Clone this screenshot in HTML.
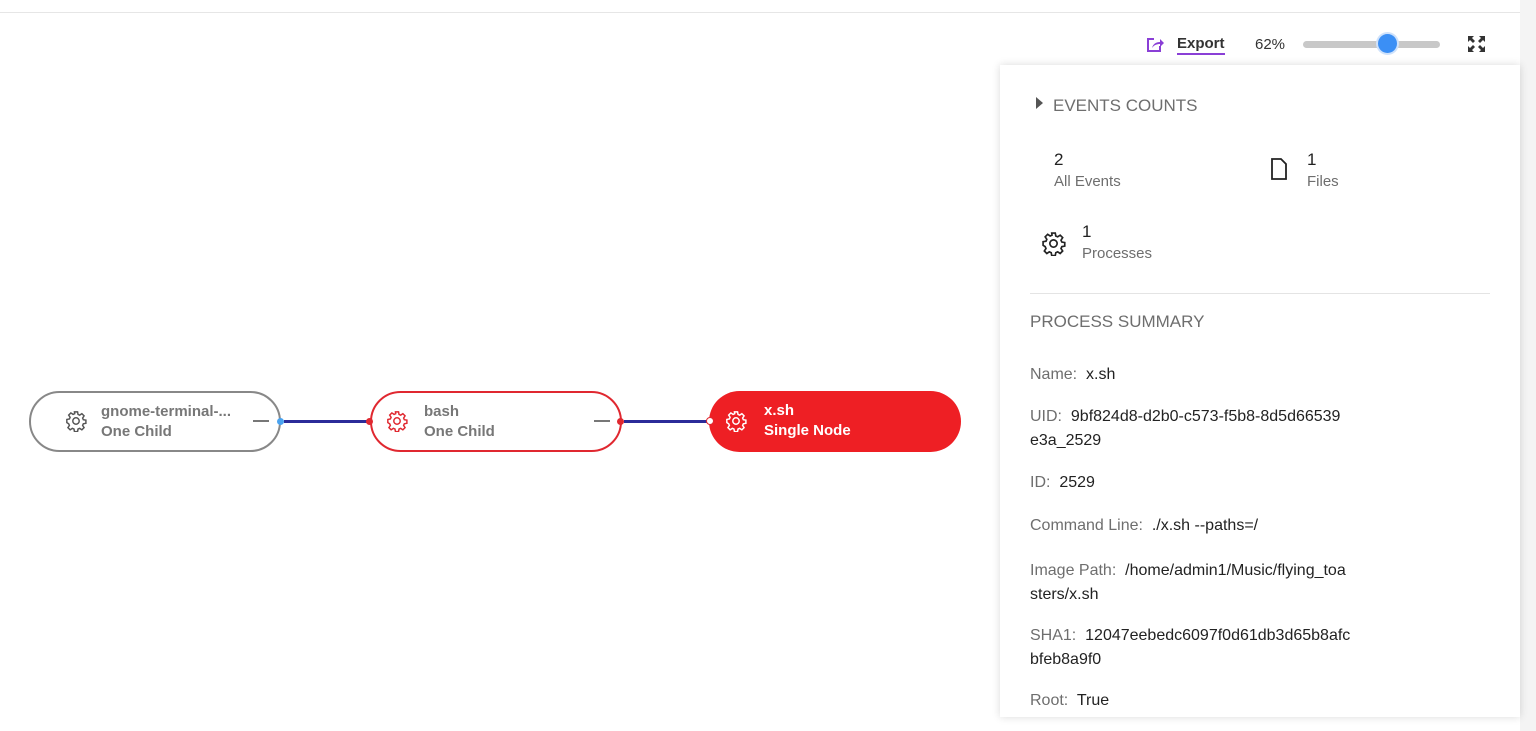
<!DOCTYPE html>
<html><head><style>
body{margin:0;width:1536px;height:731px;background:#fff;font-family:"Liberation Sans",sans-serif;position:relative;overflow:hidden}
.a{position:absolute}
.node{position:absolute;top:391px;width:248px;height:57px;border-radius:31px;border:2px solid #888;background:#fff}
.node .t{position:absolute;left:70px;top:9px;font-size:15px;font-weight:bold;color:#777;line-height:20px}
.node svg.g{position:absolute;left:34px;top:17px}
.dash{position:absolute;right:10px;top:27px;width:16px;height:2px;background:#777}
.line{position:absolute;top:420px;height:3px;background:#2b2b99}
.p{position:absolute;left:1030px;font-size:16px;color:#222;line-height:24px}
.lab,.p.lab,.p .lab{color:#6e6e6e}
</style></head><body>
<div class="a" style="left:0;top:12px;width:1536px;height:1px;background:#e6e6e6"></div>
<div class="a" style="left:1520px;top:0;width:16px;height:731px;background:#f4f4f4"></div>

<svg class="a" style="left:1146px;top:37px" width="18" height="16" viewBox="0 0 18 16"><path d="M8 2H2v12h12V9" fill="none" stroke="#8a3fd6" stroke-width="2"/><path d="M6 11c1-4 4-6 8-6V2l4 4-4 4V7c-3 0-6 1-8 4z" fill="#8a3fd6"/></svg>
<div class="a" style="left:1177px;top:35px;font-size:15px;font-weight:bold;color:#333;border-bottom:2px solid #8a3fd6;line-height:18px">Export</div>
<div class="a" style="left:1255px;top:36px;font-size:15px;color:#333">62%</div>
<div class="a" style="left:1303px;top:41px;width:137px;height:7px;border-radius:4px;background:#c8c8c8"></div>
<div class="a" style="left:1378px;top:34px;width:19px;height:19px;border-radius:50%;background:#3b8ff5;box-shadow:0 0 0 2px #cfe2fb"></div>
<svg class="a" style="left:1467px;top:35px" width="19" height="18" viewBox="0 0 19 18" fill="#333"><path d="M1 1h6l-2 2 3 3-2 2-3-3-2 2z M18 1h-6l2 2-3 3 2 2 3-3 2 2z M1 17h6l-2-2 3-3-2-2-3 3-2-2z M18 17h-6l2-2-3-3 2-2 3 3 2-2z"/></svg>

<div class="node" style="left:29px"><svg class="g" width="22" height="22" viewBox="0 0 24 24" fill="none" stroke="#555" stroke-width="1.6"><path d="M10.3 2h3.4l.5 2.8 1.8.8 2.4-1.6 2.4 2.4-1.6 2.4.8 1.8 2.8.5v3.4l-2.8.5-.8 1.8 1.6 2.4-2.4 2.4-2.4-1.6-1.8.8-.5 2.8h-3.4l-.5-2.8-1.8-.8-2.4 1.6-2.4-2.4 1.6-2.4-.8-1.8L2 13.7v-3.4l2.8-.5.8-1.8L4 5.6 6.4 3.2l2.4 1.6 1.8-.8z"/><circle cx="12" cy="12" r="3.5"/></svg><div class="t">gnome-terminal-...<br>One Child</div><div class="dash"></div></div>
<div class="a" style="left:277px;top:418px;width:7px;height:7px;border-radius:50%;background:#4aa3f0"></div>
<div class="line" style="left:284px;width:84px"></div>
<div class="node" style="left:370px;border-color:#e02830"><svg class="g" style="left:14px" width="22" height="22" viewBox="0 0 24 24" fill="none" stroke="#e02830" stroke-width="1.6"><path d="M10.3 2h3.4l.5 2.8 1.8.8 2.4-1.6 2.4 2.4-1.6 2.4.8 1.8 2.8.5v3.4l-2.8.5-.8 1.8 1.6 2.4-2.4 2.4-2.4-1.6-1.8.8-.5 2.8h-3.4l-.5-2.8-1.8-.8-2.4 1.6-2.4-2.4 1.6-2.4-.8-1.8L2 13.7v-3.4l2.8-.5.8-1.8L4 5.6 6.4 3.2l2.4 1.6 1.8-.8z"/><circle cx="12" cy="12" r="3.5"/></svg><div class="t" style="left:52px">bash<br>One Child</div><div class="dash"></div></div>
<div class="a" style="left:366px;top:418px;width:7px;height:7px;border-radius:50%;background:#e02830"></div>
<div class="a" style="left:617px;top:418px;width:7px;height:7px;border-radius:50%;background:#e02830"></div>
<div class="line" style="left:624px;width:84px"></div>
<div class="node" style="left:709px;width:252px;height:61px;border:none;background:#ee1f24"><svg class="g" style="left:16px;top:19px" width="22" height="22" viewBox="0 0 24 24" fill="none" stroke="#fff" stroke-width="1.6"><path d="M10.3 2h3.4l.5 2.8 1.8.8 2.4-1.6 2.4 2.4-1.6 2.4.8 1.8 2.8.5v3.4l-2.8.5-.8 1.8 1.6 2.4-2.4 2.4-2.4-1.6-1.8.8-.5 2.8h-3.4l-.5-2.8-1.8-.8-2.4 1.6-2.4-2.4 1.6-2.4-.8-1.8L2 13.7v-3.4l2.8-.5.8-1.8L4 5.6 6.4 3.2l2.4 1.6 1.8-.8z"/><circle cx="12" cy="12" r="3.5"/></svg><div class="t" style="left:55px;top:10px;color:#fff">x.sh<br>Single Node</div></div>
<div class="a" style="left:706px;top:417px;width:6px;height:6px;border-radius:50%;background:#fff;border:1px solid #e02830"></div>

<div class="a" style="left:1000px;top:65px;width:520px;height:652px;background:#fff;box-shadow:0 0 8px rgba(0,0,0,.15)"></div>
<div class="a" style="left:1036px;top:97px;width:0;height:0;border-left:7px solid #555;border-top:6px solid transparent;border-bottom:6px solid transparent"></div>
<div class="p lab" style="left:1053px;top:94px;font-size:17px">EVENTS COUNTS</div>
<div class="p" style="left:1054px;top:148px;font-size:17px">2</div>
<div class="p lab" style="left:1054px;top:170px;font-size:15px">All Events</div>
<svg class="a" style="left:1270px;top:158px" width="18" height="22" viewBox="0 0 18 22" fill="none" stroke="#222" stroke-width="1.8"><path d="M2 1h9l5 5v15H2z"/></svg>
<div class="p" style="left:1307px;top:148px;font-size:17px">1</div>
<div class="p lab" style="left:1307px;top:170px;font-size:15px">Files</div>
<svg class="a" style="left:1041px;top:231px" width="25" height="25" viewBox="0 0 24 24" fill="none" stroke="#222" stroke-width="1.6"><path d="M10.3 2h3.4l.5 2.8 1.8.8 2.4-1.6 2.4 2.4-1.6 2.4.8 1.8 2.8.5v3.4l-2.8.5-.8 1.8 1.6 2.4-2.4 2.4-2.4-1.6-1.8.8-.5 2.8h-3.4l-.5-2.8-1.8-.8-2.4 1.6-2.4-2.4 1.6-2.4-.8-1.8L2 13.7v-3.4l2.8-.5.8-1.8L4 5.6 6.4 3.2l2.4 1.6 1.8-.8z"/><circle cx="12" cy="12" r="3.5"/></svg>
<div class="p" style="left:1082px;top:220px;font-size:17px">1</div>
<div class="p lab" style="left:1082px;top:242px;font-size:15px">Processes</div>
<div class="a" style="left:1030px;top:293px;width:460px;height:1px;background:#e4e4e4"></div>
<div class="p lab" style="top:310px;font-size:17px">PROCESS SUMMARY</div>
<div class="p" style="top:363px"><span class="lab">Name:</span>&nbsp; x.sh</div>
<div class="p" style="top:405px"><span class="lab">UID:</span>&nbsp; 9bf824d8-d2b0-c573-f5b8-8d5d66539<br>e3a_2529</div>
<div class="p" style="top:471px"><span class="lab">ID:</span>&nbsp; 2529</div>
<div class="p" style="top:514px"><span class="lab">Command Line:</span>&nbsp; ./x.sh --paths=/</div>
<div class="p" style="top:559px"><span class="lab">Image Path:</span>&nbsp; /home/admin1/Music/flying_toa<br>sters/x.sh</div>
<div class="p" style="top:624px"><span class="lab">SHA1:</span>&nbsp; 12047eebedc6097f0d61db3d65b8afc<br>bfeb8a9f0</div>
<div class="p" style="top:689px"><span class="lab">Root:</span>&nbsp; True</div>
</body></html>
